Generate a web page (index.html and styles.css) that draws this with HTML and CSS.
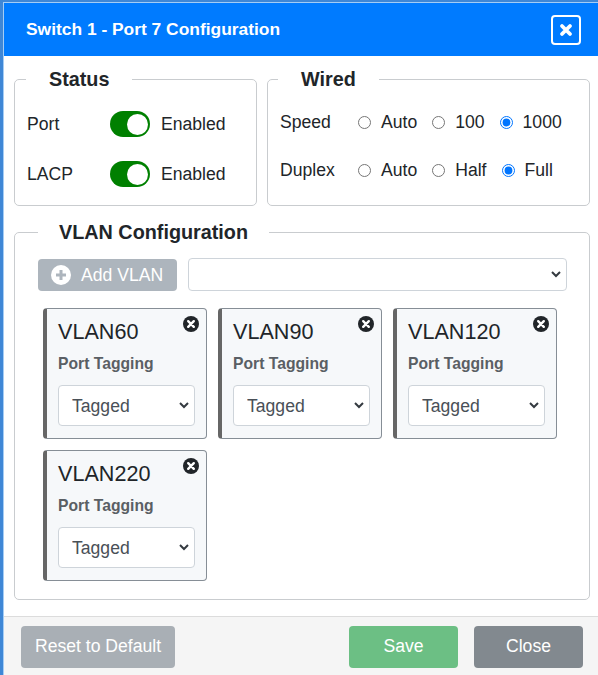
FILE: index.html
```html
<!DOCTYPE html>
<html lang="en">
<head>
<meta charset="utf-8">
<title>Port Configuration</title>
<link rel="stylesheet" href="styles.css">
</head>
<body>
<div class="modal">
  <header class="modal-head">
    <h1 class="modal-title">Switch 1 - Port 7 Configuration</h1>
    <button class="head-close" type="button" aria-label="Close">
      <svg viewBox="0 0 16 16" width="16" height="16"><path d="M4 4l8 8M12 4l-8 8" stroke="#fff" stroke-width="3.8" stroke-linecap="round"/></svg>
    </button>
  </header>
  <main class="modal-body">
    <div class="top-row">
      <fieldset class="group group-status">
        <legend class="legend legend-status">Status</legend>
        <div class="toggle-row">
          <span class="row-label">Port</span>
          <span class="toggle"><span class="knob"></span></span>
          <span>Enabled</span>
        </div>
        <div class="toggle-row">
          <span class="row-label">LACP</span>
          <span class="toggle"><span class="knob"></span></span>
          <span>Enabled</span>
        </div>
      </fieldset>
      <fieldset class="group group-wired">
        <legend class="legend legend-wired">Wired</legend>
        <div class="radio-row">
          <span class="radio-label">Speed</span>
          <label class="radio"><input type="radio" name="speed">Auto</label>
          <label class="radio"><input type="radio" name="speed">100</label>
          <label class="radio"><input type="radio" name="speed" checked>1000</label>
        </div>
        <div class="radio-row">
          <span class="radio-label">Duplex</span>
          <label class="radio"><input type="radio" name="duplex">Auto</label>
          <label class="radio"><input type="radio" name="duplex">Half</label>
          <label class="radio"><input type="radio" name="duplex" checked>Full</label>
        </div>
      </fieldset>
    </div>
    <fieldset class="group group-vlan">
      <legend class="legend legend-vlan">VLAN Configuration</legend>
      <div class="add-row">
        <button class="add-btn" type="button">
          <svg viewBox="0 0 20 20" width="20" height="20"><circle cx="10" cy="10" r="10" fill="#fff"/><path d="M10 5v10M5 10h10" stroke="#adb5bd" stroke-width="3"/></svg>
          Add VLAN
        </button>
        <select class="add-select"><option></option></select>
      </div>
      <div class="cards">
        <article class="card">
          <svg class="card-x" viewBox="0 0 16 16" width="16" height="16"><circle cx="8" cy="8" r="8" fill="#212529"/><path d="M5.2 5.2l5.6 5.6M10.8 5.2l-5.6 5.6" stroke="#fff" stroke-width="2.4" stroke-linecap="round"/></svg>
          <h2 class="card-title">VLAN60</h2>
          <div class="card-label">Port Tagging</div>
          <select class="card-select"><option>Tagged</option></select>
        </article>
        <article class="card">
          <svg class="card-x" viewBox="0 0 16 16" width="16" height="16"><circle cx="8" cy="8" r="8" fill="#212529"/><path d="M5.2 5.2l5.6 5.6M10.8 5.2l-5.6 5.6" stroke="#fff" stroke-width="2.4" stroke-linecap="round"/></svg>
          <h2 class="card-title">VLAN90</h2>
          <div class="card-label">Port Tagging</div>
          <select class="card-select"><option>Tagged</option></select>
        </article>
        <article class="card">
          <svg class="card-x" viewBox="0 0 16 16" width="16" height="16"><circle cx="8" cy="8" r="8" fill="#212529"/><path d="M5.2 5.2l5.6 5.6M10.8 5.2l-5.6 5.6" stroke="#fff" stroke-width="2.4" stroke-linecap="round"/></svg>
          <h2 class="card-title">VLAN120</h2>
          <div class="card-label">Port Tagging</div>
          <select class="card-select"><option>Tagged</option></select>
        </article>
        <article class="card">
          <svg class="card-x" viewBox="0 0 16 16" width="16" height="16"><circle cx="8" cy="8" r="8" fill="#212529"/><path d="M5.2 5.2l5.6 5.6M10.8 5.2l-5.6 5.6" stroke="#fff" stroke-width="2.4" stroke-linecap="round"/></svg>
          <h2 class="card-title">VLAN220</h2>
          <div class="card-label">Port Tagging</div>
          <select class="card-select"><option>Tagged</option></select>
        </article>
      </div>
    </fieldset>
  </main>
  <footer class="modal-foot">
    <button class="btn btn-reset" type="button">Reset to Default</button>
    <span class="foot-actions">
      <button class="btn btn-save" type="button">Save</button>
      <button class="btn btn-close" type="button">Close</button>
    </span>
  </footer>
</div>
</body>
</html>
```
FILE: styles.css
```css
* { box-sizing: border-box; }
html, body { margin: 0; padding: 0; height: 100%; overflow: hidden; }
body {
  background: #fff;
  color: #212529;
  font-family: "Liberation Sans", Arial, sans-serif;
  font-size: 17.6px;
  line-height: 1.5;
}
.modal {
  display: flex;
  flex-direction: column;
  height: 675px;
  padding: 1px 0 0 1px;
  border-left: 3px solid #3f87d6;
  border-top: 2px solid #3f87d6;
  box-shadow: inset 1px 1px 0 #a5cdf5;
}
.modal-head {
  display: flex;
  align-items: center;
  justify-content: space-between;
  height: 53px;
  padding: 0 17px 0 22px;
  background: #007bff;
  color: #fff;
}
.modal-title { margin: 0; font-size: 17.4px; font-weight: 700; }
.head-close {
  display: flex;
  align-items: center;
  justify-content: center;
  width: 30px;
  height: 30px;
  padding: 0;
  background: transparent;
  border: 2.5px solid #fff;
  border-radius: 4px;
}
.modal-body { flex: 1; padding: 10px 8px 0 10px; }
.top-row { display: flex; gap: 10px; }
.group {
  margin: 0;
  min-width: 0;
  padding: 0;
  border: 1px solid #c9cccf;
  border-radius: 5px;
}
.group-status { width: 243px; height: 140px; padding-top: 19px; }
.group-wired { width: 323px; height: 140px; padding-top: 17px; }
.group-vlan { width: 576px; height: 381px; margin-top: 13px; padding: 13px 22px 0 0; }
.legend {
  padding: 0 23px;
  font-size: 19.8px;
  font-weight: 700;
  line-height: 26px;
}
.legend-status { margin-left: 11px; }
.legend-wired { margin-left: 10px; }
.legend-vlan { margin-left: 23px; padding: 0 21px; }
.toggle-row {
  display: flex;
  align-items: center;
  height: 26px;
  margin: 0 0 24px 12px;
}
.row-label { width: 83px; }
.toggle {
  position: relative;
  width: 40px;
  height: 26px;
  margin-right: 11px;
  background: #008000;
  border-radius: 13px;
}
.knob {
  position: absolute;
  top: 2.5px;
  right: 2.5px;
  width: 21px;
  height: 21px;
  background: #fff;
  border-radius: 50%;
}
.radio-row {
  display: flex;
  align-items: center;
  height: 26px;
  margin: 0 0 22px 12px;
}
.radio-label { width: 78px; }
.radio { display: flex; align-items: center; margin-right: 15px; }
.radio input { margin: 0 10px 0 0; }
.add-row { display: flex; gap: 11px; margin-left: 23px; }
.add-btn {
  display: flex;
  align-items: center;
  gap: 10px;
  width: 139px;
  height: 32px;
  margin-top: 1px;
  padding: 0 13px;
  background: #adb5bd;
  border: 0;
  border-radius: 4px;
  color: #fff;
  font: inherit;
  white-space: nowrap;
}
.add-select, .card-select {
  appearance: none;
  background: #fff url("data:image/svg+xml,%3Csvg xmlns='http://www.w3.org/2000/svg' width='10' height='7' viewBox='0 0 10 7'%3E%3Cpath d='M1 1l4 4 4-4' fill='none' stroke='%23343a40' stroke-width='2'/%3E%3C/svg%3E") no-repeat right 5px center;
  border: 1px solid #ced4da;
  border-radius: 4px;
  font: inherit;
}
.add-select { flex: 1; height: 33px; }
.cards { display: flex; flex-wrap: wrap; gap: 11px; margin: 17px 0 0 28px; }
.card {
  position: relative;
  width: 164px;
  height: 131px;
  padding: 8px 10px 0 11px;
  background: #f6f8fa;
  border: 1px solid #868e96;
  border-left: 4px solid #666;
  border-radius: 4px;
}
.card-x { position: absolute; top: 7px; right: 7px; }
.card-title { margin: 0; font-size: 21.6px; font-weight: 400; line-height: 30px; }
.card-label { margin-top: 7px; color: #5a5f64; font-size: 15.7px; font-weight: 700; line-height: 20px; }
.card-select {
  display: block;
  width: 137px;
  height: 41px;
  margin-top: 11px;
  padding: 2px 0 0 13px;
  color: #495057;
}
.modal-foot {
  display: flex;
  align-items: center;
  justify-content: space-between;
  height: 59px;
  padding: 1px 15px 0 17px;
  background: #f5f5f5;
  border-top: 1px solid #dcdcdc;
}
.foot-actions { display: flex; gap: 16px; }
.btn {
  height: 42px;
  padding: 0;
  border: 0;
  border-radius: 4px;
  color: #fff;
  font: inherit;
}
.btn-reset { width: 154px; background: #a9afb5; }
.btn-save { width: 109px; background: #6cbf84; }
.btn-close { width: 109px; background: #82898f; }
```
